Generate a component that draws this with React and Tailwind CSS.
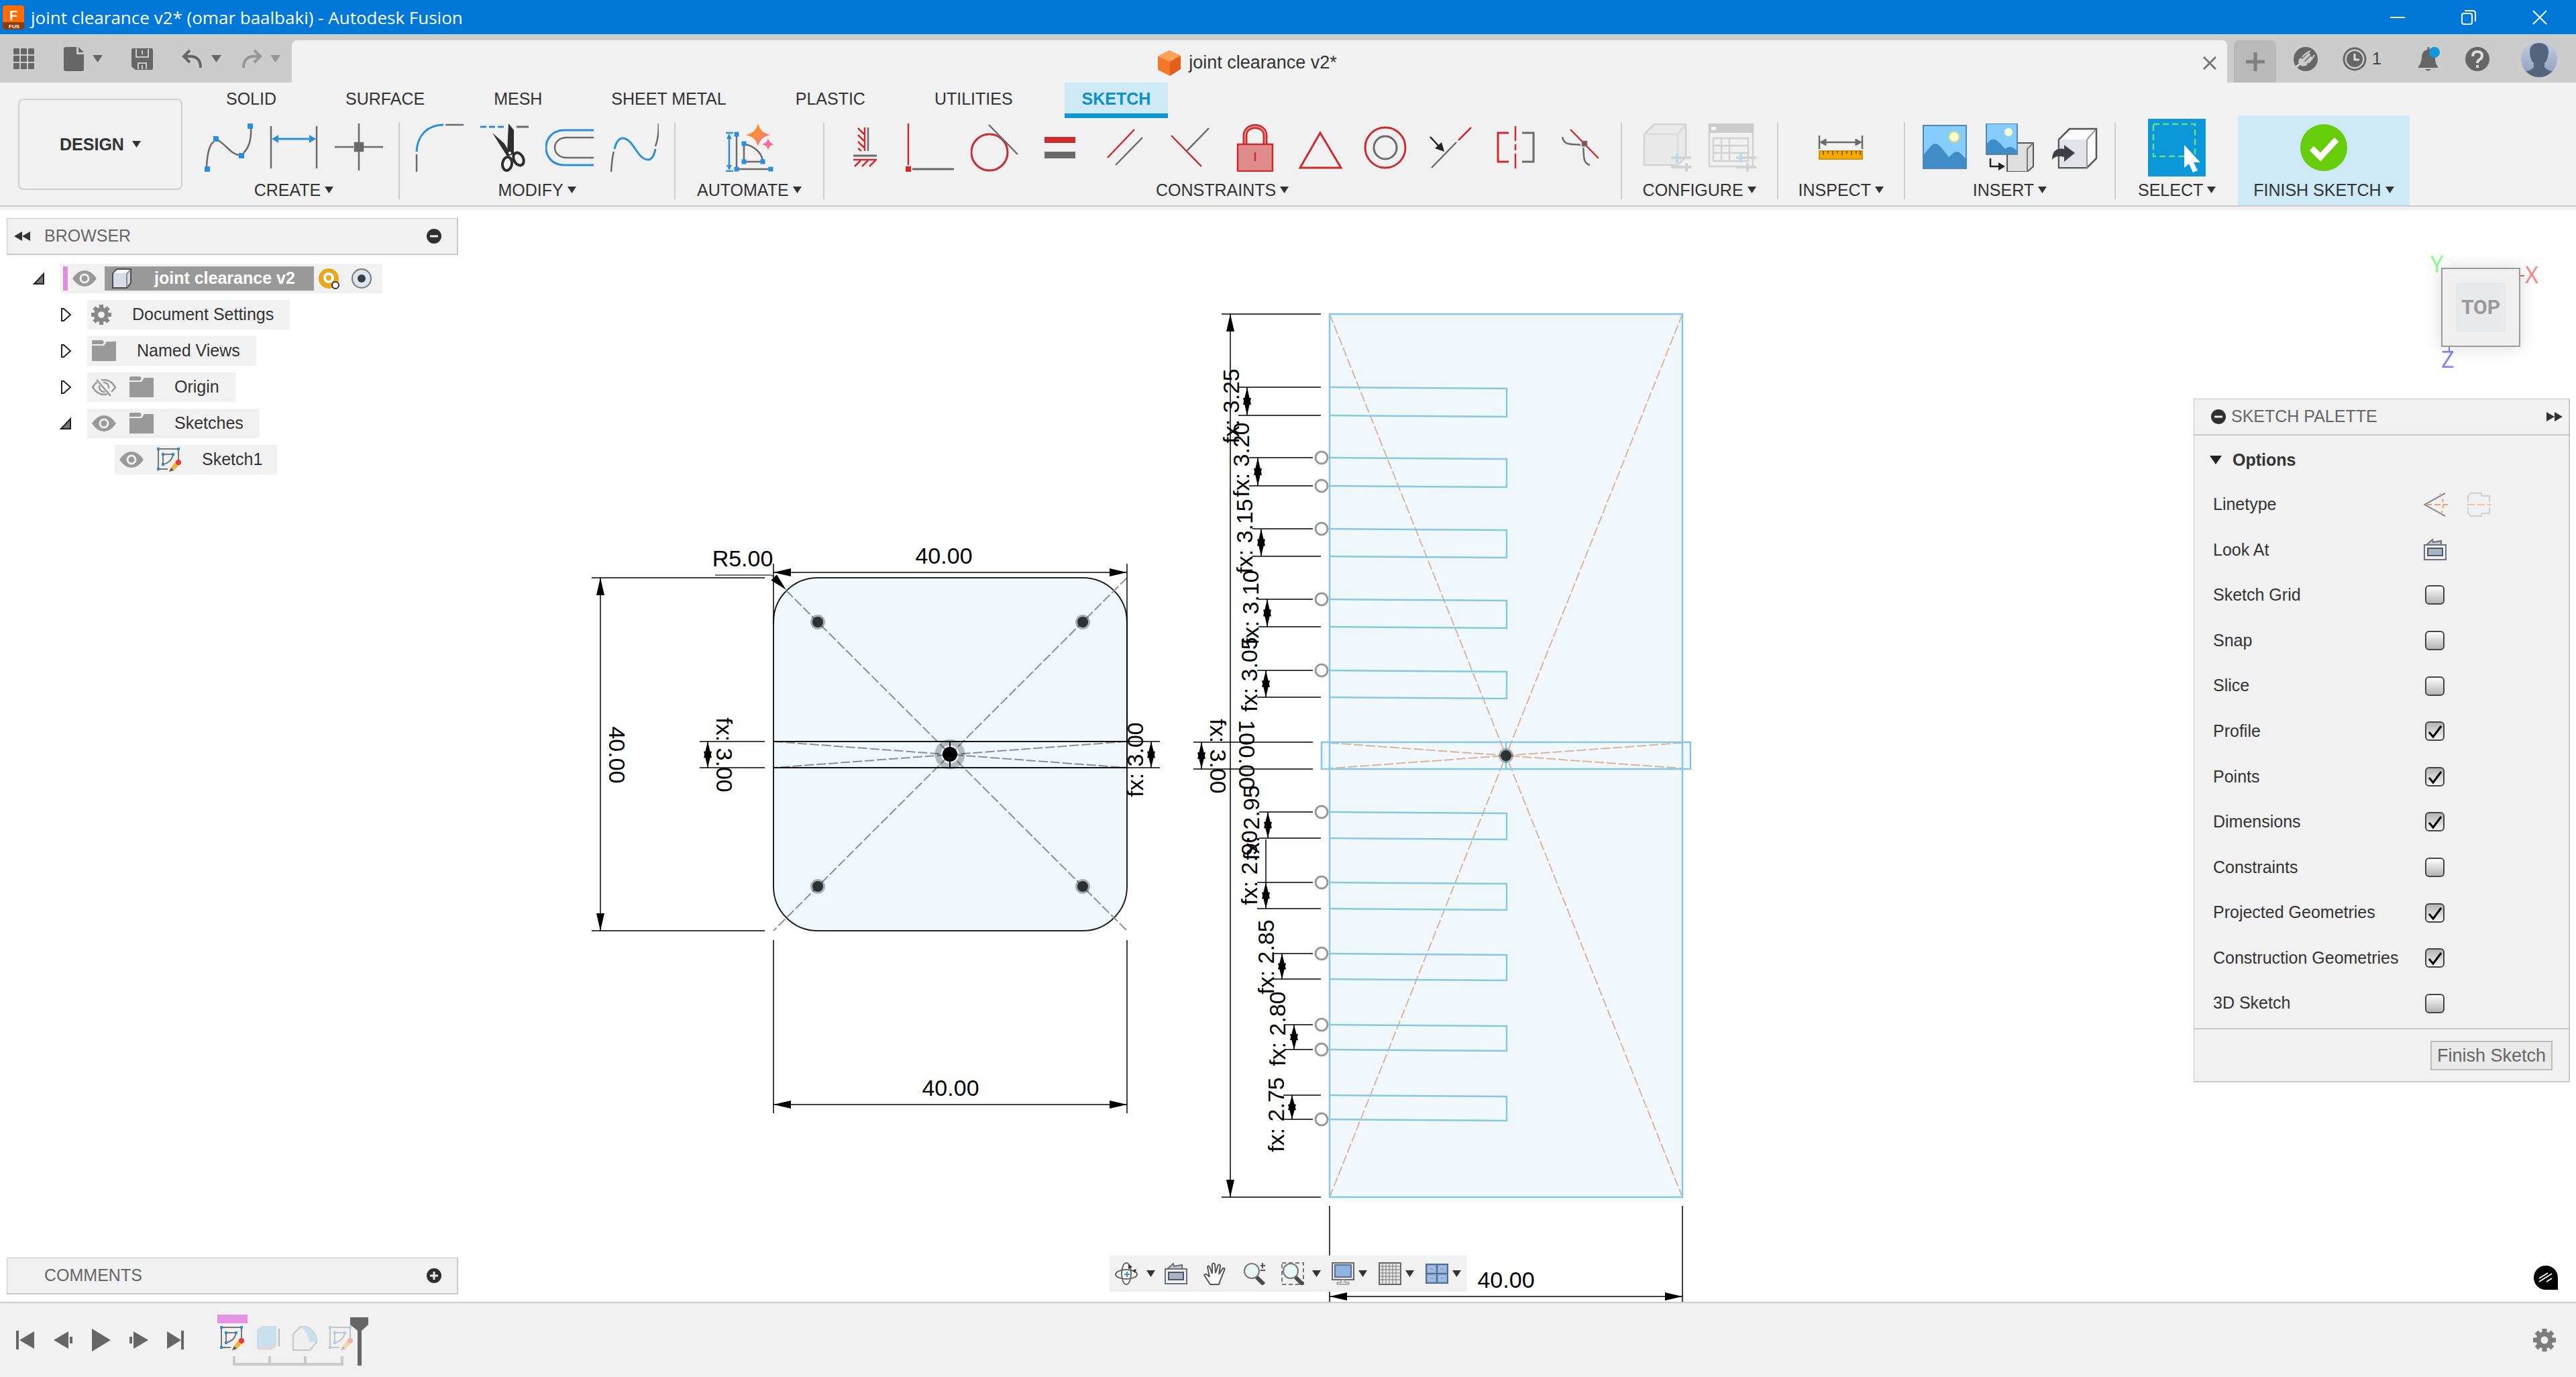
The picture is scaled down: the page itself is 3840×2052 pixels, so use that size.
import { useState } from 'react';
import clsx from 'clsx';

const BLUE = '#2a8fdc';
const RED = '#cc2c2f';
const GRAY = '#6a6a6a';

function Svg({ children, box = 72, className = 'w-[72px] h-[72px]', ...rest }) {
  return (
    <svg viewBox={`0 0 ${box} ${box}`} className={clsx('block shrink-0', className)} fill="none" strokeWidth="2.5" aria-hidden="true" {...rest}>
      {children}
    </svg>
  );
}

function Caret({ className = 'w-[13px] h-[10px] text-[#333]' }) {
  return (
    <svg viewBox="0 0 13 10" preserveAspectRatio="none" className={clsx('block shrink-0', className)} aria-hidden="true">
      <path d="M0 0H13L6.5 10Z" fill="currentColor" />
    </svg>
  );
}

// small square grip used on sketch icons
function Grip({ x, y, s = 8, c = BLUE }) {
  return <rect x={x - s / 2} y={y - s / 2} width={s} height={s} fill={c} />;
}

/* ---------- ribbon icons ---------- */

const icons = {
  spline: (
    <Svg stroke={GRAY}>
      <path d="M3 64C4 44 8 30 14 27M20 25C31 31 40 46 51 47M58 44C66 36 70 25 69 7" />
      <g stroke="none"><Grip x={4} y={68} /><Grip x={17} y={23} /><Grip x={55} y={48} /><Grip x={68} y={4} /></g>
    </Svg>
  ),
  dimension: (
    <Svg stroke={GRAY}>
      <path d="M2 4V67M70 4V67" />
      <path d="M6 23H66" stroke={BLUE} strokeWidth="3" />
      <path d="M3 23L13 17V29ZM69 23L59 17V29Z" fill={BLUE} stroke="none" />
    </Svg>
  ),
  point: (
    <Svg stroke={GRAY}>
      <path d="M36 0V28M36 42V70M0 35H28M43 35H72" />
      <Grip x={36} y={35} s={12} c={GRAY} />
    </Svg>
  ),
  fillet: (
    <Svg stroke={GRAY}>
      <path d="M2 46V72M45 2H72" />
      <path d="M2 42C3 18 18 2 42 2" stroke={BLUE} strokeWidth="3" />
    </Svg>
  ),
  trim: (
    <Svg stroke="#2d2d2d">
      <path d="M0 5H37" stroke={BLUE} strokeWidth="3" strokeDasharray="9 4" />
      <path d="M54 5H72" stroke={GRAY} strokeWidth="3" />
      <path d="M42 0L50 10V46L45 47L40 44Z" fill="#2d2d2d" stroke="none" />
      <path d="M18 14L36 30L46 47L40 49Z" fill="#2d2d2d" stroke="none" />
      <ellipse cx="40" cy="60" rx="7" ry="10" strokeWidth="4" transform="rotate(8 40 60)" />
      <ellipse cx="57" cy="53" rx="7" ry="10" strokeWidth="4" transform="rotate(-28 57 53)" />
      <circle cx="44" cy="44" r="2" fill="#fff" stroke="none" />
    </Svg>
  ),
  offset: (
    <Svg stroke={GRAY}>
      <path d="M72 10H28C-8 10 -8 62 28 62H72" stroke={BLUE} strokeWidth="3" />
      <path d="M72 21H32C8 21 8 51 32 51H72" />
    </Svg>
  ),
  blend: (
    <Svg stroke={GRAY}>
      <path d="M1 72C2 58 3 48 5 42M67 34C71 24 72 12 72 0" />
      <path d="M6 38C9 26 13 22 18 22C34 22 40 54 56 54C62 54 65 48 67 38" stroke={BLUE} strokeWidth="3" />
    </Svg>
  ),
  automate: (
    <Svg stroke={GRAY}>
      <defs>
        <linearGradient id="spark" x1="0" y1="0" x2="1" y2="1">
          <stop offset="0.5" stopColor="#fb8c3c" />
          <stop offset="0.8" stopColor="#f2709c" />
        </linearGradient>
        <linearGradient id="sparkSmall" x1="0" y1="0" x2="0" y2="1">
          <stop offset="0.5" stopColor="#f569a8" />
          <stop offset="1" stopColor="#fb8c3c" />
        </linearGradient>
      </defs>
      <path d="M17 18V68H68M28 32V57H54M30 31C44 34 54 44 56 55" />
      <path d="M6 18V66M1 14H12M1 71H12" stroke={BLUE} />
      <path d="M6 15L10 23H2ZM6 70L10 62H2Z" fill={BLUE} stroke="none" />
      <g stroke="none">
        <Grip x={17} y={16} s={7} /><Grip x={17} y={68} s={7} /><Grip x={68} y={68} s={7} />
        <Grip x={28} y={30} s={7} /><Grip x={28} y={57} s={7} /><Grip x={56} y={57} s={7} />
        <path d="M49 0C52 10 56 14 67 17C56 20 52 24 49 34C46 24 42 20 31 17C42 14 46 10 49 0Z" fill="url(#spark)" />
        <path d="M64 22C66 28 67 29 73 31C67 33 66 34 64 40C62 34 61 33 55 31C61 29 62 28 64 22Z" fill="url(#sparkSmall)" />
      </g>
    </Svg>
  ),
  horizontal: (
    <Svg stroke={RED}>
      <path d="M41 6V41" stroke={GRAY} />
      <path d="M36 6V41M26 7L35 16M26 17L35 26M26 27L35 36M26 37L31 41" />
      <path d="M19 48H54" stroke={GRAY} strokeWidth="3" />
      <path d="M19 54H54M30 55L21 64M41 55L32 64M52 55L43 64" />
    </Svg>
  ),
  coincident: (
    <Svg stroke={RED}>
      <path d="M4 0V62" />
      <path d="M10 68H72" stroke={GRAY} strokeWidth="3" />
      <Grip x={4} y={68} s={6} c={RED} />
    </Svg>
  ),
  tangent: (
    <Svg stroke={RED}>
      <circle cx="28" cy="43" r="27" strokeWidth="3" />
      <path d="M27 2L70 46" stroke={GRAY} />
    </Svg>
  ),
  equal: (
    <Svg>
      <path d="M13 20H59V29H13Z" fill={RED} />
      <path d="M13 42H59V52H13Z" fill={GRAY} />
    </Svg>
  ),
  parallel: (
    <Svg stroke={RED}>
      <path d="M10 51L50 9" />
      <path d="M22 62L62 21" stroke={GRAY} />
    </Svg>
  ),
  perpendicular: (
    <Svg stroke={RED}>
      <path d="M8 18L53 64" />
      <path d="M31 41L64 7" stroke={GRAY} />
    </Svg>
  ),
  lock: (
    <Svg stroke={RED}>
      <path d="M21 30V18C21 0 51 0 51 18V30" strokeWidth="7" />
      <path d="M21 30V18C21 0 51 0 51 18V30" stroke="#e28f8f" strokeWidth="2" />
      <path d="M10 31H62V71H10Z" fill="#de8b8b" />
      <path d="M36 43V56" />
    </Svg>
  ),
  polygon: (
    <Svg stroke={RED}>
      <path d="M36 14L67 66H6Z" strokeWidth="3" />
    </Svg>
  ),
  concentric: (
    <Svg stroke={RED} strokeWidth="3">
      <circle cx="36" cy="36" r="30" />
      <circle cx="36" cy="36" r="17" stroke={GRAY} />
    </Svg>
  ),
  midpoint: (
    <Svg stroke={GRAY}>
      <path d="M8 66L45 28" />
      <path d="M48 25L67 6" stroke={RED} />
      <path d="M6 20L20 35" stroke="#222" />
      <path d="M27 42L13 37L23 28Z" fill="#222" stroke="none" />
    </Svg>
  ),
  symmetry: (
    <Svg stroke={RED}>
      <path d="M26 14H10V57H26" strokeWidth="3" />
      <path d="M46 14H63V57H46" stroke={GRAY} strokeWidth="3" />
      <path d="M36 4V26M36 31V40M36 45V67" />
    </Svg>
  ),
  curvature: (
    <Svg stroke={GRAY}>
      <path d="M9 20C12 34 22 30 36 32M40 36C42 46 38 58 50 62" />
      <path d="M21 9L63 52" stroke={RED} />
      <Grip x={42} y={30} s={6} c={RED} />
    </Svg>
  ),
  configure: (
    <Svg stroke="#d2d2d2">
      <path d="M2 16L17 1H64V50L52 62H2Z" fill="#e9e9e9" />
      <path d="M2 16H52V62M52 16L64 1" stroke="#dcdcdc" />
      <path d="M42 51H73M42 65H73" strokeWidth="4" />
      <path d="M51 45V58" stroke="#b9d9f2" strokeWidth="4" />
      <path d="M65 59V72" strokeWidth="4" />
    </Svg>
  ),
  configTable: (
    <Svg stroke="#d2d2d2">
      <path d="M2 1H67V64H2Z" fill="#f1f1f1" />
      <path d="M1 0H68V14H1Z" fill="#cbcbcb" stroke="none" />
      <path d="M5 5H12V10H5Z" fill="#f5f5f5" stroke="none" />
      <path d="M8 22H60V56H8ZM20 22V56M32 22V56M8 33H60M8 44H60" />
      <path d="M42 51H72M42 65H72" strokeWidth="4" />
      <path d="M49 45V58" stroke="#b9d9f2" strokeWidth="4" />
      <path d="M59 59V72" strokeWidth="4" />
    </Svg>
  ),
  measure: (
    <Svg stroke={GRAY}>
      <path d="M4 18V38M68 18V38M8 28H64" />
      <path d="M5 28L14 23V33ZM67 28L58 23V33Z" fill={GRAY} strokeWidth="1" />
      <path d="M4 41H68V53H4Z" fill="#f5a800" stroke="#d88f00" strokeWidth="2" />
      <path d="M10 41V47M17 41V45M24 41V47M31 41V45M38 41V47M45 41V45M52 41V47M59 41V45M65 41V47" stroke="#6b4800" strokeWidth="1.5" />
    </Svg>
  ),
  picture: (
    <Svg>
      <path d="M4 3H68V67H4Z" fill="#85ccff" stroke="#4e88b8" strokeWidth="2" />
      <path d="M5 66V46L15 34Q22 26 30 35L42 50L50 43Q56 40 60 45L67 52V66Z" fill="#3f8cc7" />
      <circle cx="50" cy="20" r="8" fill="#fdfbd0" stroke="#c5d59b" />
    </Svg>
  ),
  decal: (
    <Svg>
      <path d="M30 31L36 29H71V64L62 72H32V36Z" fill="#dedede" stroke="#555" strokeWidth="2" />
      <path d="M62 72V38L71 29" stroke="#777" strokeWidth="2" />
      <path d="M1 0H47V46H1Z" fill="#85ccff" stroke="#4e88b8" strokeWidth="2" />
      <path d="M2 45V30Q10 18 20 28L29 38Q36 31 46 40V45Z" fill="#3f8cc7" />
      <circle cx="34" cy="13" r="6" fill="#fdfbd0" />
      <path d="M7 52V64H22" stroke="#222" />
      <path d="M29 64L19 58V70Z" fill="#222" />
    </Svg>
  ),
  derive: (
    <Svg>
      <path d="M12 24L28 8H68V52L54 66H12Z" fill="#fbfbfb" stroke="#555" />
      <path d="M13 24H54V65H13Z" fill="#e2e3e8" />
      <path d="M54 24V66M54 24L67 9" stroke="#999" strokeWidth="2" />
      <path d="M2 54C2 42 8 36 20 38V32L36 44L20 57V50C12 48 6 49 2 54Z" fill="#3d4046" />
    </Svg>
  ),
  select: (
    <Svg box={86} className="w-[86px] h-[86px]">
      <path d="M0 0H86V86H0Z" fill="#0c97d9" />
      <path d="M8 8H70V56H8Z" stroke="#5fe08a" strokeDasharray="9 5" />
      <path d="M54 39L78 65H68L74 77L67 80L61 67L54 73Z" fill="#fff" />
    </Svg>
  ),
  finish: (
    <Svg>
      <circle cx="36" cy="36" r="35" fill="#67cc0a" />
      <path d="M18 37L31 50L55 24" stroke="#fff" strokeWidth="9" />
    </Svg>
  ),
};

const RIBBON_TABS = ['SOLID', 'SURFACE', 'MESH', 'SHEET METAL', 'PLASTIC', 'UTILITIES', 'SKETCH'];

const RIBBON_GROUPS = [
  { label: 'CREATE', tools: ['spline', 'dimension', 'point'], pad: 'px-[23px]' },
  { label: 'MODIFY', tools: ['fillet', 'trim', 'offset', 'blend'], pad: 'px-[23px]' },
  { label: 'AUTOMATE', tools: ['automate'], pad: 'px-8' },
  {
    label: 'CONSTRAINTS',
    tools: ['horizontal', 'coincident', 'tangent', 'equal', 'parallel', 'perpendicular', 'lock', 'polygon', 'concentric', 'midpoint', 'symmetry', 'curvature'],
    pad: 'px-6',
  },
  { label: 'CONFIGURE', tools: ['configure', 'configTable'], pad: 'px-[31px]' },
  { label: 'INSPECT', tools: ['measure'], pad: 'px-[30px]' },
  { label: 'INSERT', tools: ['picture', 'decal', 'derive'], pad: 'px-[23px]' },
  { label: 'SELECT', tools: ['select'], pad: 'px-[33px]', last: true },
  { label: 'FINISH SKETCH', tools: ['finish'], pad: 'px-[23px]', active: true },
];

/* ---------- title bar + document tabs ---------- */

function TitleBar() {
  return (
    <header className="flex h-[51px] items-center bg-[#0078d7] pl-1 text-white">
      <svg viewBox="0 0 32 36" className="h-9 w-8" aria-hidden="true">
        <rect width="32" height="36" rx="4" fill="#ff6b00" />
        <path d="M0 25H32V32Q32 36 28 36H4Q0 36 0 32Z" fill="#8f3a00" />
        <text x="10" y="22" fontSize="20" fontWeight="700" fontFamily="Liberation Sans, sans-serif" fill="#fff">F</text>
        <text x="9" y="34" fontSize="8" fontWeight="700" fontFamily="Liberation Sans, sans-serif" fill="#fff">FUS</text>
      </svg>
      <h1 className="ml-[10px] flex-1 font-['Open_Sans',sans-serif] text-[26px] leading-8">joint clearance v2* (omar baalbaki) - Autodesk Fusion</h1>
      <div className="flex items-center gap-[84px] pr-[43px]">
        <button type="button" aria-label="Minimize">
          <Svg box={22} className="h-[22px] w-[22px]" stroke="#fff"><path d="M0 11H22" strokeWidth="2" /></Svg>
        </button>
        <button type="button" aria-label="Restore">
          <Svg box={22} className="h-[22px] w-[22px]" stroke="#fff" strokeWidth="2">
            <rect x="1" y="5" width="15" height="16" rx="3" />
            <path d="M5 1H17Q21 1 21 5V17" />
          </Svg>
        </button>
        <button type="button" aria-label="Close">
          <Svg box={22} className="h-[22px] w-[22px]" stroke="#fff" strokeWidth="2"><path d="M1 1L21 21M21 1L1 21" /></Svg>
        </button>
      </div>
    </header>
  );
}

function QuickAccess() {
  return (
    <div className="flex w-[435px] items-center pl-5 text-[#666]">
      <button type="button" aria-label="Data panel">
        <Svg box={32} className="h-8 w-8" fill="currentColor">
          {[0, 11, 22].map(y => [0, 11, 22].map(x => <rect key={`${x}-${y}`} x={x} y={y} width="9" height="9" rx="1" />))}
        </Svg>
      </button>
      <button type="button" aria-label="File" className="ml-[43px] flex items-center gap-3">
        <svg viewBox="0 0 31 36" className="h-9 w-[31px]" fill="currentColor" aria-hidden="true">
          <path d="M3 0H19V11H30V33Q30 36 27 36H3Q0 36 0 33V3Q0 0 3 0ZM22 0L30 8H22Z" />
        </svg>
        <Caret className="h-[11px] w-[15px] text-[#666]" />
      </button>
      <button type="button" aria-label="Save" className="ml-[43px]">
        <Svg box={32} className="h-8 w-8">
          <path d="M2 0H30Q32 0 32 2V30Q32 32 30 32H6L0 27V2Q0 0 2 0Z" fill="currentColor" />
          <path d="M7 1V13H25V1M10 31V22H22V31M16 3V9M16 25V31" stroke="#ccc" strokeWidth="2" />
        </Svg>
      </button>
      <button type="button" aria-label="Undo" className="ml-[43px] flex items-center gap-3">
        <Svg box={32} className="h-8 w-8" stroke="currentColor" strokeWidth="4">
          <path d="M12 3L3 12L12 21M4 12H14Q28 13 28 29" />
        </Svg>
        <Caret className="h-[11px] w-[15px] text-[#666]" />
      </button>
      <button type="button" aria-label="Redo" className="ml-[29px] flex items-center gap-3 text-[#969696]">
        <Svg box={32} className="h-8 w-8" stroke="currentColor" strokeWidth="4">
          <path d="M20 3L29 12L20 21M28 12H18Q4 13 4 29" />
        </Svg>
        <Caret className="h-[11px] w-[15px] text-[#969696]" />
      </button>
    </div>
  );
}

function DocumentBar() {
  return (
    <div className="flex h-[72px] items-stretch border-t border-[#dcdcdc] bg-[#ccc]">
      <QuickAccess />
      <div className="mt-2 flex flex-1 items-center rounded-t-lg bg-[#f1f1f1] pt-1 pr-4">
        <div className="flex flex-1 items-center justify-center gap-3 text-[27px] text-[#333]">
          <svg viewBox="0 0 34 38" className="h-[38px] w-[34px]" aria-hidden="true">
            <path d="M17 0L34 8V28L18 38L0 29V9Z" fill="#f4772a" />
            <path d="M17 0L34 8L18 17L0 9Z" fill="#fba15a" />
            <path d="M18 17L34 8V28L18 38Z" fill="#e2611a" />
          </svg>
          joint clearance v2*
        </div>
        <button type="button" aria-label="Close tab">
          <Svg box={20} className="h-5 w-5" stroke="#777" strokeWidth="3"><path d="M1 1L19 19M19 1L1 19" /></Svg>
        </button>
      </div>
      <button type="button" aria-label="New tab" className="mt-2 ml-[10px] flex w-[63px] items-center justify-center rounded-t-lg bg-[#b9b9b9]">
        <Svg box={30} className="h-[30px] w-[30px]" stroke="#808080" strokeWidth="5"><path d="M15 1V29M1 15H29" /></Svg>
      </button>
      <div className="flex items-center pr-7 pl-[26px] text-[#666]">
        <button type="button" aria-label="Extensions">
          <Svg box={36} className="h-9 w-9">
            <circle cx="18" cy="18" r="18" fill="currentColor" />
            <path d="M11 16L21 26Q15 31 10 27L3 33L1 30L8 24Q5 20 11 16Z" fill="#ccc" />
            <path d="M13 15Q18 9 25 6M22 24Q28 18 31 12" stroke="#ccc" strokeWidth="2" />
            <path d="M14 20L24 10M18 24L27 15" stroke="#ccc" strokeWidth="4" />
          </Svg>
        </button>
        <button type="button" aria-label="Job status" className="ml-[37px] flex items-center gap-2 text-[25px] text-[#444]">
          <Svg box={36} className="h-9 w-9">
            <circle cx="18" cy="18" r="16" stroke="#666" strokeWidth="3" />
            <circle cx="18" cy="18" r="12" fill="#666" />
            <path d="M18 10V19H25" stroke="#ddd" strokeWidth="3" />
          </Svg>
          1
        </button>
        <button type="button" aria-label="Notifications" className="ml-[53px]">
          <Svg box={36} className="h-9 w-9">
            <path d="M16 0H18L19 4Q27 6 27 16Q27 25 31 29V31H2V29Q6 25 7 16Q7 6 15 4ZM12 33H21Q17 38 12 33Z" fill="currentColor" />
            <circle cx="26" cy="8" r="8" fill="#0f97dc" />
          </Svg>
        </button>
        <button type="button" aria-label="Help" className="ml-9">
          <Svg box={36} className="h-9 w-9">
            <circle cx="18" cy="18" r="18" fill="currentColor" />
            <path d="M11 14Q11 7 18 7Q25 7 25 13Q25 17 21 19Q18 21 18 24" stroke="#ddd" strokeWidth="4" />
            <rect x="16" y="27" width="4" height="4" fill="#ddd" />
          </Svg>
        </button>
        <button type="button" aria-label="Account" className="ml-[47px]">
          <Svg box={54} className="h-[54px] w-[54px]">
            <defs>
              <linearGradient id="avatar" x1="0" y1="0" x2="0" y2="1">
                <stop offset="0" stopColor="#c3cfe2" />
                <stop offset="1" stopColor="#8b9dbb" />
              </linearGradient>
              <clipPath id="avatarClip"><circle cx="27" cy="27" r="27" /></clipPath>
            </defs>
            <circle cx="27" cy="27" r="27" fill="url(#avatar)" />
            <path d="M27 3Q41 3 41 17Q40 29 35 33V39Q38 44 49 46V54H5V46Q16 44 19 39V33Q14 29 13 17Q13 3 27 3Z" fill="#54647d" clipPath="url(#avatarClip)" />
          </Svg>
        </button>
      </div>
    </div>
  );
}

/* ---------- ribbon ---------- */

function RibbonGroup({ label, tools, pad, last, active }) {
  return (
    <>
      <div className={clsx('flex flex-col items-center', pad, active && 'bg-[#cdeaf6]')}>
        <div className="flex h-24 items-center gap-[25px]">
          {tools.map(t => <button key={t} type="button" aria-label={t}>{icons[t]}</button>)}
        </div>
        <button type="button" className="flex h-[30px] items-center gap-[6px] whitespace-nowrap">
          {label} <Caret />
        </button>
      </div>
      {!last && !active && <div className="mt-[10px] h-[115px] w-[2px] bg-[#cecece]" />}
    </>
  );
}

function Ribbon() {
  const [tab, setTab] = useState('SKETCH');
  return (
    <div className="bg-[#f1f1f1] text-[25px] leading-[30px] text-[#333]">
      <div className="flex h-[185px] border-b-2 border-[#cbcbcb] pl-[27px]">
        <button type="button" className="mt-6 flex h-[136px] w-[245px] items-center justify-center gap-3 rounded-lg border-2 border-[#d0d0d0] font-bold">
          DESIGN <Caret />
        </button>
        <div className="ml-[10px] flex flex-1 flex-col">
          <nav className="-mb-1 flex gap-[51px] pl-[29px]">
            {RIBBON_TABS.map(t => (
              <button
                key={t}
                type="button"
                onClick={() => setTab(t)}
                className={clsx('h-[53px] border-b-[7px] px-[26px] pt-[2px]', t === tab ? 'border-[#0c97d6] bg-[#cdeaf6] font-bold text-[#0c8fce]' : 'border-transparent')}
              >
                {t}
              </button>
            ))}
          </nav>
          <div className="flex flex-1">
            {RIBBON_GROUPS.map(g => <RibbonGroup key={g.label} {...g} />)}
          </div>
        </div>
      </div>
      <div className="h-[5px]" />
    </div>
  );
}

/* ---------- browser tree ---------- */

function RoundSign({ plus }) {
  return (
    <Svg box={22} className="h-[22px] w-[22px]">
      <circle cx="11" cy="11" r="11" fill="#2f2f2f" />
      <path d={plus ? 'M5 11H17M11 5V17' : 'M5 11H17'} stroke="#eee" strokeWidth="3" />
    </Svg>
  );
}

function Eye() {
  return (
    <Svg box={36} className="h-9 w-9">
      <path d="M0 18Q8 6 18 6Q28 6 36 18Q28 30 18 30Q8 30 0 18Z" fill="#999" />
      <circle cx="18" cy="18" r="6" stroke="#efefef" strokeWidth="3" />
    </Svg>
  );
}

function EyeOff() {
  return (
    <Svg box={36} className="h-9 w-9" stroke="#999">
      <path d="M1 18Q8 7 18 7Q28 7 35 18Q28 29 18 29Q8 29 1 18Z" />
      <circle cx="18" cy="18" r="7" />
      <path d="M8 6L29 30" stroke="#f1f1f1" strokeWidth="7" />
      <path d="M7 7L28 31" />
    </Svg>
  );
}

function Folder() {
  return (
    <Svg box={36} className="h-9 w-9">
      <path d="M0 4Q0 2 2 2H16L18 5L16 8H0ZM0 10H18L22 4H36V33H0Z" fill="#999" />
    </Svg>
  );
}

function Gear({ className = 'h-[30px] w-[30px] text-[#888]' }) {
  return (
    <Svg box={34} className={className}>
      <circle cx="17" cy="17" r="9" stroke="currentColor" strokeWidth="7" />
      {[0, 45, 90, 135].map(a => (
        <path key={a} d="M17 0V6M17 28V34" stroke="currentColor" strokeWidth="7" transform={`rotate(${a} 17 17)`} />
      ))}
    </Svg>
  );
}

function SketchGlyph() {
  return (
    <g stroke="#777" strokeWidth="2">
      <path d="M2 2H32V18M2 2V32H16M9 10H24Q22 22 9 25Z" />
      <g stroke="none">
        <Grip x={2} y={2} s={4} /><Grip x={32} y={2} s={4} /><Grip x={2} y={32} s={4} />
        <Grip x={9} y={10} s={4} /><Grip x={24} y={10} s={4} /><Grip x={9} y={25} s={4} />
        <path d="M28 20L34 25L25 34L20 35L21 30Z" fill="#f3b13c" />
        <path d="M21 30L25 34L18 36Z" fill="#555" />
        <circle cx="32" cy="22" r="4" fill="#e23b3b" />
      </g>
    </g>
  );
}

function Cube() {
  return (
    <svg viewBox="0 0 30 30" className="h-[30px] w-[30px]" aria-hidden="true">
      <path d="M2 8L8 1H29V22L23 29H2Z" fill="#d9dce4" stroke="#4d4d4d" strokeWidth="2" />
      <path d="M23 8V28M23 8L28 2" stroke="#8a8d95" strokeWidth="2" />
      <path d="M3 7L9 2H27L22 7Z" fill="#f7f8fa" />
    </svg>
  );
}

function Twisty({ open }) {
  return (
    <button type="button" aria-label={open ? 'Collapse' : 'Expand'}>
      <Svg box={20} className="h-5 w-5" stroke="#222" strokeWidth="2">
        {open ? <path d="M17 3V18H3Z" fill="#777" /> : <path d="M4 1H7L17 10L7 19H4Z" fill="#fff" />}
      </Svg>
    </button>
  );
}

const TREE = [
  { label: 'Document Settings', icons: [<Gear key="g" />], pad: 'pl-[6px]' },
  { label: 'Named Views', icons: [<Folder key="f" />], pad: 'pl-[7px]' },
  { label: 'Origin', icons: [<EyeOff key="e" />, <Folder key="f" />], pad: 'pl-[7px]' },
  { label: 'Sketches', icons: [<Eye key="e" />, <Folder key="f" />], pad: 'pl-[7px]', open: true },
];

function PanelBar({ label, plus, collapse }) {
  return (
    <div className="flex h-[55px] w-[673px] items-center border border-r-2 border-b-2 border-[#c8c8c8] bg-[#f1f1f1] pr-[23px] pl-[9px] text-[25px] text-[#666]">
      <div className="w-[46px]">
        {collapse && <Svg box={26} className="h-[26px] w-[26px]"><path d="M13 6V20L1 13ZM25 6V20L13 13Z" fill="#333" /></Svg>}
      </div>
      <h2 className="flex-1">{label}</h2>
      <button type="button" aria-label={`Toggle ${label}`}><RoundSign plus={plus} /></button>
    </div>
  );
}

function BrowserPanel() {
  return (
    <section className="absolute top-[12px] left-[10px] text-[25px] text-[#333]">
      <PanelBar label="BROWSER" collapse />
      <ul className="mt-[13px] flex flex-col items-start gap-[10px] pl-[38px]">
        <li className="flex h-11 items-center">
          <Twisty open />
          <div className="ml-[22px] flex h-11 items-center bg-[#f1f1f1] pr-[15px] pl-1">
            <span className="h-9 w-[7px] bg-[#e08fe0]" />
            <span className="ml-[7px]"><Eye /></span>
            <span className="ml-3 flex h-9 items-center bg-[#999] pr-[28px] pl-[10px] font-bold text-white">
              <Cube />
              <span className="ml-[34px]">joint clearance v2</span>
            </span>
            <Svg box={32} className="ml-[6px] h-8 w-8">
              <circle cx="16" cy="16" r="15" fill="#e8a81c" />
              <circle cx="16" cy="15" r="6" stroke="#fff" strokeWidth="4" />
              <circle cx="26" cy="26" r="5" fill="#fff" stroke="#333" strokeWidth="2" />
            </Svg>
            <Svg box={32} className="ml-[17px] h-8 w-8">
              <circle cx="16" cy="16" r="14" fill="#dfe3ec" stroke="#777" strokeWidth="2" />
              <circle cx="16" cy="16" r="6" fill="#3a3d44" />
            </Svg>
          </div>
        </li>
        {TREE.map(row => (
          <li key={row.label} className="ml-10 flex h-11 items-center">
            <Twisty open={row.open} />
            <div className={clsx('ml-[22px] flex h-11 items-center bg-[#f1f1f1] pr-6', row.pad)}>
              <span className="flex items-center gap-[20px]">{row.icons}</span>
              <span className="ml-[31px]">{row.label}</span>
            </div>
          </li>
        ))}
        <li className="ml-[123px] flex h-11 items-center bg-[#f1f1f1] pr-[22px] pl-[7px]">
          <Eye />
          <Svg box={36} className="ml-[20px] h-9 w-9"><SketchGlyph /></Svg>
          <span className="ml-[31px]">Sketch1</span>
        </li>
      </ul>
    </section>
  );
}

/* ---------- sketch palette ---------- */

const OPTIONS = [
  ['Sketch Grid', false], ['Snap', false], ['Slice', false], ['Profile', true], ['Points', true], ['Dimensions', true],
  ['Constraints', false], ['Projected Geometries', true], ['Construction Geometries', true], ['3D Sketch', false],
];

function LookAtGlyph() {
  return (
    <g strokeWidth="2">
      <path d="M4 10L13 2L14 6L26 4V10" fill="#c5c9d2" stroke="#6d7078" />
      <path d="M1 10H33V32H1Z" fill="#f3f4f6" stroke="#6d7078" />
      <path d="M6 15H28V26H6Z" fill="#a9b3c5" stroke="#50545c" />
    </g>
  );
}

function PaletteCheck({ label, initial }) {
  const [on, setOn] = useState(initial);
  const id = `opt-${label.replace(/\s/g, '-').toLowerCase()}`;
  return (
    <div className="flex items-center">
      <label htmlFor={id} className="w-[316px] whitespace-nowrap">{label}</label>
      <span className="relative block h-[29px] w-[29px]">
        <input
          id={id}
          type="checkbox"
          checked={on}
          onChange={e => setOn(e.target.checked)}
          className="block h-[29px] w-[29px] appearance-none rounded-[6px] border-2 border-[#444] bg-linear-to-b from-white to-[#b4b4b4] checked:from-[#b4b4b4] checked:to-[#f4f4f4]"
        />
        {on && (
          <Svg box={29} className="pointer-events-none absolute inset-0 h-[29px] w-[29px]">
            <path d="M6 16L12 23L24 7" stroke="#000" strokeWidth="3" />
          </Svg>
        )}
      </span>
    </div>
  );
}

function SketchPalette() {
  return (
    <section className="absolute top-[281px] right-[9px] w-[561px] border border-r-2 border-b-2 border-[#c8c8c8] bg-[#f1f1f1] text-[25px] text-[#333]">
      <header className="flex h-[54px] items-center border-b-2 border-[#c8c8c8] pr-2 pl-[25px] text-[#666]">
        <RoundSign />
        <h2 className="ml-2 flex-1">SKETCH PALETTE</h2>
        <Svg box={26} className="h-[26px] w-[26px]"><path d="M1 6V20L13 13ZM13 6V20L25 13Z" fill="#333" /></Svg>
      </header>
      <div className="border-b-2 border-[#c8c8c8] pb-[3px] pl-7">
        <button type="button" className="flex h-[69px] items-center gap-4 pt-1 font-bold">
          <svg viewBox="0 0 18 13" className="-ml-[5px] h-[13px] w-[18px]" aria-hidden="true"><path d="M0 0H18L9 13Z" fill="#222" /></svg>
          Options
        </button>
        <div className="grid h-[811px] auto-rows-fr">
          <div className="flex items-center">
            <span className="w-[314px]">Linetype</span>
            <button type="button" aria-label="Construction line">
              <Svg box={36} className="h-9 w-9" stroke="#8a8a8a" strokeWidth="2">
                <path d="M32 1L1 18L32 35" />
                <path d="M3 18H36" stroke="#e8a27c" strokeDasharray="9 4" />
                <path d="M24 1Q34 18 24 35" stroke="#e8a27c" strokeDasharray="5 4" />
              </Svg>
            </button>
            <button type="button" aria-label="Centerline" className="ml-7">
              <Svg box={36} className="h-9 w-9" stroke="#cfcfcf" strokeWidth="2">
                <path d="M2 14V6L6 1H22V5H34V14M2 22V30L6 35H22V31H34V22" />
                <path d="M0 18H36" stroke="#f3c6ab" strokeDasharray="12 3" />
              </Svg>
            </button>
          </div>
          <div className="flex items-center">
            <span className="w-[314px]">Look At</span>
            <button type="button" aria-label="Look at"><Svg box={34} className="h-[34px] w-[34px]"><LookAtGlyph /></Svg></button>
          </div>
          {OPTIONS.map(([label, on]) => <PaletteCheck key={label} label={label} initial={on} />)}
        </div>
      </div>
      <footer className="flex h-[77px] items-center justify-end pr-6">
        <button type="button" className="h-11 border-2 border-[#bdbdbd] bg-[#eaeaea] px-2 text-[27px] leading-9 text-[#666]">Finish Sketch</button>
      </footer>
    </section>
  );
}

/* ---------- sketch geometry ---------- */

const INK = '#000';

// arrow head with its tip at (x, y)
function Head({ x, y, a = 0, len = 26, w = 6 }) {
  return <path d={`M0 0L${-w} ${len}H${w}Z`} fill={INK} transform={`translate(${x} ${y}) rotate(${a})`} />;
}

function VDim({ x, y1, y2, from, to }) {
  const len = Math.min(26, (y2 - y1) * 0.62);
  return (
    <g stroke={INK} strokeWidth="1.5">
      <path d={`M${x} ${y1}V${y2}M${from} ${y1}H${to[0]}M${from} ${y2}H${to[1]}`} />
      <g stroke="none"><Head x={x} y={y1} len={len} /><Head x={x} y={y2} a={180} len={len} /></g>
    </g>
  );
}

function HDim({ x1, x2, y }) {
  return (
    <g>
      <path d={`M${x1} ${y}H${x2}`} stroke={INK} strokeWidth="1.5" />
      <Head x={x1} y={y} a={-90} />
      <Head x={x2} y={y} a={90} />
    </g>
  );
}

function DimText({ x, y, a = 0, children }) {
  return (
    <text transform={`translate(${x} ${y}) rotate(${a})`} y="12" textAnchor="middle" fontSize="34" fill={INK} fontFamily="Liberation Sans, Arial, sans-serif">
      {children}
    </text>
  );
}

// gap: value, top, bottom, dimension line x, label x/y, open circle on top / bottom corner
const SLOTS = [
  { v: '3.25', t: 577, b: 619, dx: 1859, tx: 1835, ty: 605, ct: false, cb: false },
  { v: '3.20', t: 682, b: 724, dx: 1875, tx: 1850, ty: 685, ct: true, cb: true },
  { v: '3.15', t: 788, b: 829, dx: 1880, tx: 1855, ty: 799, ct: true, cb: false },
  { v: '3.10', t: 893, b: 934, dx: 1889, tx: 1864, ty: 905, ct: true, cb: false },
  { v: '3.05', t: 999, b: 1039, dx: 1887, tx: 1862, ty: 1005, ct: true, cb: false },
  { v: '2.95', t: 1210, b: 1249, dx: 1890, tx: 1865, ty: 1226, ct: true, cb: false },
  { v: '2.90', t: 1315, b: 1354, dx: 1887, tx: 1862, ty: 1293, ct: true, cb: false },
  { v: '2.85', t: 1421, b: 1459, dx: 1911, tx: 1887, ty: 1426, ct: true, cb: false },
  { v: '2.80', t: 1527, b: 1564, dx: 1929, tx: 1904, ty: 1533, ct: true, cb: true },
  { v: '2.75', t: 1632, b: 1668, dx: 1926, tx: 1902, ty: 1661, ct: false, cb: true },
];

function Dot({ x, y }) {
  return (
    <g>
      <circle cx={x} cy={y} r="11" fill="#000" opacity="0.3" />
      <circle cx={x} cy={y} r="8" fill="#2e3134" />
    </g>
  );
}

function SketchCanvas() {
  return (
    <svg viewBox="0 313 3840 1627" preserveAspectRatio="xMinYMin slice" className="absolute inset-0 h-full w-full" fill="none" role="img" aria-label="Sketch1">
      {/* rounded plate */}
      <rect x="1153" y="861" width="527" height="526" rx="66" fill="#f0f8fd" stroke="#222" strokeWidth="2" />
      <g stroke="#8b8f94" strokeWidth="2" strokeDasharray="14 4">
        <path d="M1172 880L1680 1387M1680 861L1153 1387" />
        <path d="M1153 1105L1680 1144M1680 1105L1153 1144" />
      </g>
      <path d="M1153 1105H1680M1153 1144H1680" stroke="#111" strokeWidth="2" />
      <Dot x={1219} y={927} /><Dot x={1614} y={927} /><Dot x={1219} y={1321} /><Dot x={1614} y={1321} />
      <circle cx="1416" cy="1124" r="18" stroke="#000" strokeOpacity="0.25" strokeWidth="9" />
      <path d="M1416 1105V1144" stroke="#111" strokeWidth="2" />
      <circle cx="1416" cy="1124" r="11" fill="#000" />

      <path d="M1153 840V930M1680 840V1144M1153 1401V1659M1680 1401V1659" stroke={INK} strokeWidth="1.5" />
      <HDim x1={1153} x2={1680} y={853} />
      <HDim x1={1153} x2={1680} y={1646} />
      <path d="M1066 857H1150L1158 864" stroke="#444" strokeWidth="1.5" />
      <Head x={1172} y={879} a={135} />
      <path d="M895 861V1387M882 861H1140M882 1387H1140" stroke={INK} strokeWidth="1.5" />
      <Head x={895} y={861} />
      <Head x={895} y={1387} a={180} />
      <VDim x={1055} y1={1105} y2={1144} from={1043} to={[1140, 1140]} />
      <VDim x={1716} y1={1105} y2={1144} from={1729} to={[1680, 1680]} />
      <DimText x={1107} y={832}>R5.00</DimText>
      <DimText x={1407} y={828}>40.00</DimText>
      <DimText x={1417} y={1621}>40.00</DimText>
      <DimText x={920} y={1125} a={90}>40.00</DimText>
      <DimText x={1080} y={1125} a={90}>fx: 3.00</DimText>
      <DimText x={1692} y={1132} a={-90}>fx: 3.00</DimText>

      {/* comb plate */}
      <rect x="1982" y="468" width="526" height="1316" fill="#f0f8fd" />
      <rect x="1970" y="1106" width="550" height="40" fill="#f0f8fd" />
      <g stroke="#dcb596" strokeWidth="2" strokeDasharray="14 4">
        <path d="M1982 468L2508 1784M2508 468L1982 1784" />
        <path d="M1982 1107L2508 1145M2508 1107L1982 1145" />
      </g>
      <g stroke="#86c8e4" strokeWidth="2.5">
        <rect x="1982" y="468" width="526" height="1316" />
        <rect x="1970" y="1106" width="550" height="40" />
        <path d="M2245 1106V1146" />
        {SLOTS.map(s => <path key={s.v} d={`M1982 ${s.t}L2246 ${s.t + 2}V${s.b + 2}L1982 ${s.b}`} />)}
      </g>
      <Dot x={2245} y={1126} />

      {SLOTS.map(s => (
        <g key={s.v}>
          <VDim x={s.dx} y1={s.t} y2={s.b} from={s.dx - 13} to={[s.ct ? 1957 : 1969, s.cb ? 1957 : 1969]} />
          {s.ct && <circle cx="1970" cy={s.t} r="9" fill="#fff" stroke="#999" strokeWidth="3" />}
          {s.cb && <circle cx="1970" cy={s.b} r="9" fill="#fff" stroke="#999" strokeWidth="3" />}
          <DimText x={s.tx} y={s.ty} a={-90}>{`fx: ${s.v}`}</DimText>
        </g>
      ))}
      <path d="M1887 1251V1315" stroke={INK} strokeWidth="1.5" />

      <path d="M1834 468V1784M1821 468H1969M1821 1784H1969" stroke={INK} strokeWidth="1.5" />
      <Head x={1834} y={468} />
      <Head x={1834} y={1784} a={180} />
      <VDim x={1791} y1={1106} y2={1146} from={1779} to={[1957, 1957]} />
      <DimText x={1816} y={1127} a={90}>fx: 3.00</DimText>
      <DimText x={1859} y={1125} a={90}>100.00</DimText>

      <path d="M1982 1797V1940M2508 1797V1940" stroke={INK} strokeWidth="1.5" />
      <HDim x1={1982} x2={2508} y={1932} />
      <DimText x={2245} y={1907}>40.00</DimText>
    </svg>
  );
}

function ViewCube() {
  return (
    <div className="absolute top-[67px] right-[56px] h-[170px] w-[160px] font-['Open_Sans',sans-serif] text-[34px] leading-none">
      <span className="absolute top-[-4px] left-[-1px] text-[#86fb86]">Y</span>
      <span className="absolute top-[12px] right-0 text-[#ff8080]">X</span>
      <span className="absolute bottom-[-2px] left-[15px] text-[#8080ff]">Z</span>
      <span className="absolute top-[30px] right-[21px] h-[2px] w-[6px] bg-[#e06060]" />
      <span className="absolute top-[137px] left-[26px] h-[6px] w-[2px] bg-[#8080ff]" />
      <button type="button" className="absolute top-[19px] left-[15px] flex h-[118px] w-[118px] items-center justify-center border-2 border-[#9a9a9a] bg-[#f0f0f0] shadow-[0_0_24px_rgba(0,0,0,0.15)]">
        <span className="flex h-[74px] w-[74px] items-center justify-center bg-[#e8e9eb] font-['Roboto',sans-serif] text-[30px] font-bold text-[#999]">TOP</span>
      </button>
    </div>
  );
}

/* ---------- navigation bar ---------- */

function Lens() {
  return (
    <>
      <path d="M21 22L32 33" stroke="#4a4a4a" strokeWidth="6" />
      <circle cx="14" cy="13" r="11" fill="#e9f5f4" stroke="#777" strokeWidth="2" />
    </>
  );
}

const NAV = [
  {
    id: 'Orbit', caret: 'ml-[13px]', ml: '',
    icon: (
      <>
        <ellipse cx="17" cy="17" rx="7" ry="16" fill="#fff" stroke="#666" strokeWidth="2" />
        <ellipse cx="17" cy="18" rx="16" ry="7" stroke="#666" strokeWidth="2" />
        <path d="M18 14V22M14 18H22" stroke={BLUE} strokeWidth="2" />
        <path d="M20 3L26 7L20 10ZM26 12L32 10L30 16Z" fill="#333" />
      </>
    ),
  },
  { id: 'Look At', ml: 'ml-[14px]', icon: <LookAtGlyph /> },
  {
    id: 'Pan', ml: 'ml-6',
    icon: <path d="M10 33L3 22Q0 18 2 18Q5 17 9 22L6 7Q7 4 9 7L13 17L13 3Q15 0 17 3L18 16L22 4Q25 2 25 6L23 18L29 9Q33 8 31 12L25 27L23 33Z" fill="#fff" stroke="#555" strokeWidth="2" />,
  },
  {
    id: 'Zoom', ml: 'ml-[24px]',
    icon: <><Lens /><path d="M27 5H34M30 1V9M27 12H34" stroke="#555" strokeWidth="2" /></>,
  },
  {
    id: 'Fit', ml: 'ml-[24px]', caret: 'ml-[12px]',
    icon: <><path d="M1 1H33V33H1Z" stroke="#777" strokeWidth="2" strokeDasharray="6 4" /><Lens /></>,
  },
  {
    id: 'Display Settings', ml: 'ml-4', caret: 'ml-[6px]',
    icon: (
      <>
        <path d="M1 1H33V26H1Z" fill="#e8e8ea" stroke="#666" strokeWidth="2" />
        <path d="M5 4H29V22H5Z" fill="#8fb4e0" stroke="#5a6f92" strokeWidth="2" />
        <path d="M14 26H20V30H26V33H8V30H14Z" fill="#ddd" stroke="#777" strokeWidth="1" />
      </>
    ),
  },
  {
    id: 'Grid and Snaps', ml: 'ml-[17px]', caret: 'ml-[6px]',
    icon: (
      <>
        <path d="M1 1H33V33H1Z" fill="#e6e6e8" stroke="#666" strokeWidth="2" />
        <path d="M6 1V33M11 1V33M16 1V33M21 1V33M26 1V33M1 6H33M1 11H33M1 16H33M1 21H33M1 26H33" stroke="#777" strokeWidth="1" />
      </>
    ),
  },
  {
    id: 'Viewports', ml: 'ml-[17px]', caret: 'ml-[6px]',
    icon: (
      <>
        <path d="M1 3H33V31H1Z" fill="#8fb0dc" stroke="#54698c" strokeWidth="2" />
        <path d="M17 3V31M1 17H33" stroke="#54698c" strokeWidth="2" />
        <path d="M5 7H13V13H5ZM21 7H29V13H21ZM5 21H13V27H5ZM21 21H29V27H21Z" stroke="#bcd0ec" strokeWidth="1" />
      </>
    ),
  },
];

function NavBar() {
  return (
    <div className="absolute bottom-[15px] left-[1654px] flex h-[54px] items-center bg-[#f1f1f1] pr-[9px] pl-2">
      {NAV.map(n => (
        <button key={n.id} type="button" aria-label={n.id} className={clsx('flex items-center', n.ml)}>
          <Svg box={34} className="h-[34px] w-[34px]">{n.icon}</Svg>
          {n.caret && <span className={n.caret}><Caret /></span>}
        </button>
      ))}
    </div>
  );
}

/* ---------- timeline ---------- */

const PLAYBACK = [
  { id: 'Go to start', d: 'M0 4H4V32H0ZM27 5V31L5 18Z' },
  { id: 'Step back', d: 'M22 5V31L0 18ZM24 13H28V23H24Z' },
  { id: 'Play', d: 'M1 1L29 18L1 35Z' },
  { id: 'Step forward', d: 'M7 5V31L29 18ZM1 13H5V23H1Z' },
  { id: 'Go to end', d: 'M1 5V31L22 18ZM22 4H26V32H22Z' },
];

function Timeline() {
  return (
    <footer className="relative flex h-[112px] items-center border-t-2 border-[#cdcdcd] bg-[#f1f1f1] pr-[30px] pl-6">
      <div className="flex items-center gap-[26px]">
        {PLAYBACK.map(p => (
          <button key={p.id} type="button" aria-label={p.id}>
            <svg viewBox="0 0 30 36" className="h-9 w-[30px]" aria-hidden="true"><path d={p.d} fill="#666" /></svg>
          </button>
        ))}
      </div>
      <svg viewBox="0 0 230 84" className="ml-[46px] h-[84px] w-[230px]" fill="none" role="img" aria-label="Timeline features">
        <path d="M0 4H45V17H0Z" fill="#e593e5" />
        <path d="M25 66V78H186V66M78 66V78M131 66V78" stroke="#c9c9c9" strokeWidth="4" />
        <g transform="translate(4 21)"><SketchGlyph /></g>
        <g transform="translate(58 21)" opacity="0.35">
          <path d="M2 6L9 1H29V27L22 33H2Z" fill="#7fc0ea" stroke="#8ab6d6" strokeWidth="2" />
          <path d="M3 34H22L29 29" stroke="#d99" strokeWidth="3" />
          <path d="M34 4V30" stroke="#555" strokeWidth="2" />
        </g>
        <g transform="translate(112 21)" opacity="0.4">
          <path d="M1 12L12 1H20Q36 8 36 24L26 36H1Z" fill="#eee" stroke="#888" strokeWidth="2" />
          <path d="M12 1H20Q36 8 36 24H25Q24 10 12 1Z" fill="#8dc6ea" />
        </g>
        <g transform="translate(166 21)" opacity="0.35"><SketchGlyph /></g>
        <path d="M198 8H225V19L215 28V80H209V28L198 19Z" fill="#666" />
      </svg>
      <div className="flex-1" />
      <button type="button" aria-label="Preferences"><Gear className="h-[34px] w-[34px] text-[#7d7d7d]" /></button>
    </footer>
  );
}

export default function App() {
  return (
    <div className="flex h-screen min-h-[1200px] flex-col overflow-hidden bg-white font-['Liberation_Sans',Arial,sans-serif]">
      <TitleBar />
      <DocumentBar />
      <Ribbon />
      <main className="relative flex-1 overflow-hidden bg-white">
        <SketchCanvas />
        <BrowserPanel />
        <ViewCube />
        <SketchPalette />
        <NavBar />
        <div className="absolute bottom-[11px] left-[10px]"><PanelBar label="COMMENTS" plus /></div>
        <button type="button" aria-label="Assistant" className="absolute right-[27px] bottom-[18px]">
          <Svg box={36} className="h-9 w-9">
            <path d="M18 0A18 18 0 0 1 36 18V36H18A18 18 0 0 1 18 0Z" fill="#000" />
            <path d="M8 19L21 11M8 24L27 12M19 24L27 19" stroke="#fff" strokeWidth="2" />
          </Svg>
        </button>
      </main>
      <Timeline />
    </div>
  );
}
